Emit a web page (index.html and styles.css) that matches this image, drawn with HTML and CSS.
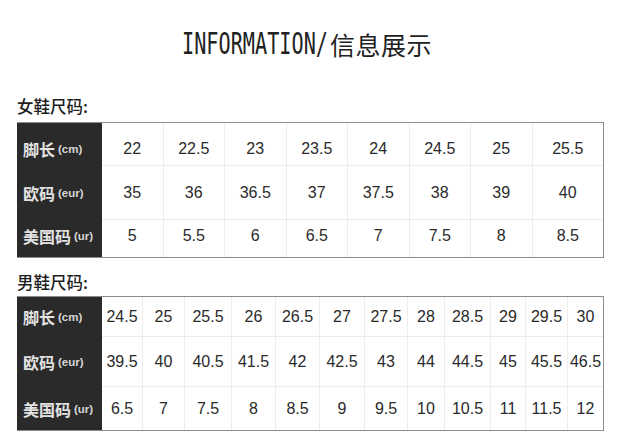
FILE: index.html
```html
<!DOCTYPE html>
<html lang="zh-CN">
<head>
<meta charset="utf-8">
<title>INFORMATION/信息展示</title>
<link rel="stylesheet" href="styles.css">
</head>
<body>
<div class="page">
  <h1 class="title"><span class="latin">INFORMATION/</span><span class="cjk">信息展示</span></h1>

  <section class="size-section women">
    <h2 class="label">女鞋尺码:</h2>
    <div class="size-grid grid-women">
      <div class="head r1">脚长<small>(cm)</small></div>
      <div class="cell r1">22</div><div class="cell r1">22.5</div><div class="cell r1">23</div><div class="cell r1">23.5</div><div class="cell r1">24</div><div class="cell r1">24.5</div><div class="cell r1">25</div><div class="cell r1 last">25.5</div>
      <div class="head r2">欧码<small>(eur)</small></div>
      <div class="cell r2">35</div><div class="cell r2">36</div><div class="cell r2">36.5</div><div class="cell r2">37</div><div class="cell r2">37.5</div><div class="cell r2">38</div><div class="cell r2">39</div><div class="cell r2 last">40</div>
      <div class="head r3">美国码<small>(ur)</small></div>
      <div class="cell r3 bottom">5</div><div class="cell r3 bottom">5.5</div><div class="cell r3 bottom">6</div><div class="cell r3 bottom">6.5</div><div class="cell r3 bottom">7</div><div class="cell r3 bottom">7.5</div><div class="cell r3 bottom">8</div><div class="cell r3 bottom last">8.5</div>
    </div>
  </section>

  <section class="size-section men">
    <h2 class="label">男鞋尺码:</h2>
    <div class="size-grid grid-men">
      <div class="head">脚长<small>(cm)</small></div>
      <div class="cell">24.5</div><div class="cell">25</div><div class="cell">25.5</div><div class="cell">26</div><div class="cell">26.5</div><div class="cell">27</div><div class="cell">27.5</div><div class="cell">28</div><div class="cell">28.5</div><div class="cell">29</div><div class="cell">29.5</div><div class="cell last">30</div>
      <div class="head">欧码<small>(eur)</small></div>
      <div class="cell">39.5</div><div class="cell">40</div><div class="cell">40.5</div><div class="cell">41.5</div><div class="cell">42</div><div class="cell">42.5</div><div class="cell">43</div><div class="cell">44</div><div class="cell">44.5</div><div class="cell">45</div><div class="cell">45.5</div><div class="cell last">46.5</div>
      <div class="head">美国码<small>(ur)</small></div>
      <div class="cell bottom">6.5</div><div class="cell bottom">7</div><div class="cell bottom">7.5</div><div class="cell bottom">8</div><div class="cell bottom">8.5</div><div class="cell bottom">9</div><div class="cell bottom">9.5</div><div class="cell bottom">10</div><div class="cell bottom">10.5</div><div class="cell bottom">11</div><div class="cell bottom">11.5</div><div class="cell bottom last">12</div>
    </div>
  </section>
</div>
</body>
</html>
```

FILE: styles.css
```css
* { box-sizing: border-box; }

html, body {
  margin: 0;
  padding: 0;
  background: #ffffff;
}

body {
  font-family: "Liberation Sans", "Noto Sans CJK SC", sans-serif;
  color: #2b2b2b;
  width: 640px;
  height: 440px;
  overflow: hidden;
}

.page {
  padding: 0 36px 0 17px;
}

.title {
  margin: 0;
  padding: 29px 0 0 165px;
  height: 82px;
  display: flex;
  align-items: flex-start;
  font-weight: normal;
  color: #222;
  line-height: 30px;
}

.title .latin {
  display: inline-block;
  width: 148px;
  white-space: nowrap;
  font-family: "DejaVu Sans Mono", monospace;
  font-size: 29.5px;
  transform: scaleX(0.685);
  transform-origin: left center;
}

.title .cjk {
  font-family: "Noto Sans CJK SC", sans-serif;
  font-size: 25px;
  letter-spacing: 0.5px;
}

.label {
  margin: 0;
  font-family: "Noto Sans CJK SC", sans-serif;
  font-size: 16.5px;
  line-height: 18px;
  font-weight: 500;
  color: #1e1e1e;
  height: 22px;
}

.women .label {
  margin-top: 15px;
  margin-bottom: 3px;
}

.men .label {
  margin-top: 15px;
  margin-bottom: 1px;
}

.size-grid {
  display: grid;
  width: 587px;
  border-top: 1px solid #8c8c8c;
  border-right: 1px solid #8c8c8c;
  border-bottom: 1px solid #8c8c8c;
}

.grid-women {
  grid-template-columns: 85px repeat(7, 61.5px) 1fr;
  grid-template-rows: 43px 54px 37px;
}

.grid-men {
  grid-template-columns: 85px 41px 42px 47px 44px 44px 45px 43px 37px 46px 35px 42px 1fr;
  grid-template-rows: 40px 50px 43px;
}

.head {
  background: #2a2a2a;
  color: #e2e2e2;
  font-family: "Noto Sans CJK SC", sans-serif;
  font-size: 16px;
  font-weight: 700;
  display: flex;
  align-items: center;
  padding-left: 6px;
  white-space: nowrap;
}

.head small {
  font-family: "Liberation Sans", sans-serif;
  font-size: 11.5px;
  font-weight: 700;
  margin-left: 3px;
  color: #d6d6d6;
}

.cell {
  display: flex;
  align-items: center;
  justify-content: center;
  font-size: 16px;
  color: #2a2a2a;
  border-right: 1px solid #ececec;
  border-bottom: 1px solid #ececec;
  white-space: nowrap;
}

.cell.last { border-right: none; }
.cell.bottom { border-bottom: none; }

.grid-women .r1 { padding-top: 9px; }
.grid-women .r3 { padding-bottom: 5px; }
.grid-women .head.r1 { padding-top: 9px; }
```
